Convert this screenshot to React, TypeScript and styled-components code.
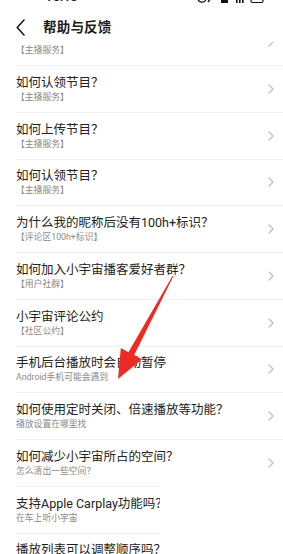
import React from "react";
import styled, { createGlobalStyle } from "styled-components";

const Global = createGlobalStyle`
  html, body { margin: 0; padding: 0; background: #ffffff; }
  body { width: 283px; height: 554px; overflow: hidden; }
  * { box-sizing: border-box; }
`;

const Page = styled.div`
  position: relative;
  width: 283px;
  height: 554px;
  overflow: hidden;
  background: #ffffff;
  font-family: Roboto, "Noto Sans CJK SC", "Noto Sans", sans-serif;
  color: #222222;
`;

const StatusBar = styled.div`
  height: 4px;
  overflow: hidden;
  display: flex;
  align-items: flex-end;
  justify-content: space-between;
  padding: 0 18px 0 45px;
`;

const Clock = styled.span`
  font-size: 13px;
  line-height: 14px;
  font-weight: 500;
  color: #111111;
`;

const StatusIcons = styled.svg`
  display: block;
  flex-shrink: 0;
`;

const Header = styled.header`
  height: 38px;
  padding: 8px 0 0 16px;
  display: flex;
  align-items: center;
  gap: 18px;
  background: #ffffff;
`;

const Title = styled.h1`
  margin: 0;
  font-size: 13.5px;
  line-height: 18px;
  font-weight: 700;
  color: #1c1c1c;
  letter-spacing: 0.2px;
`;

const List = styled.div`
  display: flex;
  flex-direction: column;
`;

const Peek = styled.div`
  height: 23px;
  overflow: hidden;
  display: flex;
  flex-direction: column;
  justify-content: flex-end;
`;

const TailClip = styled.div`
  width: 160px;
  overflow: hidden;
  & > * {
    width: 267px;
    flex-shrink: 0;
  }
`;

const Row = styled.div<{ $first?: boolean }>`
  flex-shrink: 0;
  height: 46.75px;
  margin-left: 16px;
  padding-right: 9px;
  border-top: ${(p) => (p.$first ? "none" : "1px solid #f1f1f1")};
  display: flex;
  align-items: center;
  justify-content: space-between;
`;

const TextBlock = styled.div`
  display: flex;
  flex-direction: column;
  white-space: nowrap;
`;

const RowTitle = styled.div`
  min-height: 16px;
  font-size: 12.5px;
  line-height: 16px;
  color: #222222;
`;

const RowSub = styled.div`
  font-size: 8.8px;
  line-height: 12px;
  color: #8a8a8a;
`;

const Chevron = styled.svg`
  display: block;
  flex-shrink: 0;
`;

const Overlay = styled.svg`
  position: absolute;
  left: 0;
  top: 0;
  pointer-events: none;
`;

type Item = { title: string; sub: string };

const items: Item[] = [
  { title: "如何认领节目？", sub: "【主播服务】" },
  { title: "如何上传节目？", sub: "【主播服务】" },
  { title: "如何认领节目？", sub: "【主播服务】" },
  { title: "为什么我的昵称后没有100h+标识？", sub: "【评论区100h+标识】" },
  { title: "如何加入小宇宙播客爱好者群？", sub: "【用户社群】" },
  { title: "小宇宙评论公约", sub: "【社区公约】" },
  { title: "手机后台播放时会自动暂停", sub: "Android手机可能会遇到" },
  { title: "如何使用定时关闭、倍速播放等功能？", sub: "播放设置在哪里找" },
  { title: "如何减少小宇宙所占的空间？", sub: "怎么清出一些空间？" },
];

const tail: Item[] = [
  { title: "支持Apple Carplay功能吗？", sub: "在车上听小宇宙" },
  { title: "播放列表可以调整顺序吗？", sub: "播放列表" },
];

const Arrow = () => (
  <Chevron width="6" height="10" viewBox="0 0 6 10">
    <path d="M1 1 L5 5 L1 9" fill="none" stroke="#bdbdbd" strokeWidth="1.2" strokeLinecap="round" strokeLinejoin="round" />
  </Chevron>
);

const FaqRow = ({ item, first }: { item: Item; first?: boolean }) => (
  <Row $first={first}>
    <TextBlock>
      <RowTitle>{item.title}</RowTitle>
      <RowSub>{item.sub}</RowSub>
    </TextBlock>
    <Arrow />
  </Row>
);

export default function App() {
  return (
    <Page>
      <Global />
      <StatusBar>
        <Clock>15:13</Clock>
        <StatusIcons width="68" height="12" viewBox="0 0 68 12">
          <circle cx="5" cy="6" r="4.2" fill="none" stroke="#111" strokeWidth="1.3" />
          <path d="M11 2 L14 6 L11 10" fill="none" stroke="#111" strokeWidth="1.3" />
          <rect x="24" y="3" width="7" height="8" fill="#111" />
          <rect x="39" y="7" width="1.6" height="4" fill="#111" />
          <rect x="42" y="5" width="1.6" height="6" fill="#111" />
          <rect x="45" y="3" width="1.6" height="8" fill="#111" />
          <rect x="54" y="3.5" width="12" height="7" rx="1.5" fill="none" stroke="#111" strokeWidth="1.2" />
        </StatusIcons>
      </StatusBar>
      <Header>
        <svg width="9" height="17" viewBox="0 0 9 17">
          <path d="M8 1 L1.2 8.5 L8 16" fill="none" stroke="#1c1c1c" strokeWidth="1.6" strokeLinecap="round" strokeLinejoin="round" />
        </svg>
        <Title>帮助与反馈</Title>
      </Header>
      <List>
        <Peek>
          <FaqRow first item={{ title: "", sub: "【主播服务】" }} />
        </Peek>
        {items.map((it, i) => (
          <FaqRow key={i} item={it} />
        ))}
        <TailClip>
          {tail.map((it, i) => (
            <FaqRow key={i} item={it} />
          ))}
        </TailClip>
      </List>
      <Overlay width="283" height="554" viewBox="0 0 283 554">
        <polygon
          points="173.4,276.2 172.6,275.8 128.4,352.2 120.8,348.0 118,379 142,359.2 134.2,355.0"
          fill="#ee2a24"
        />
      </Overlay>
    </Page>
  );
}
